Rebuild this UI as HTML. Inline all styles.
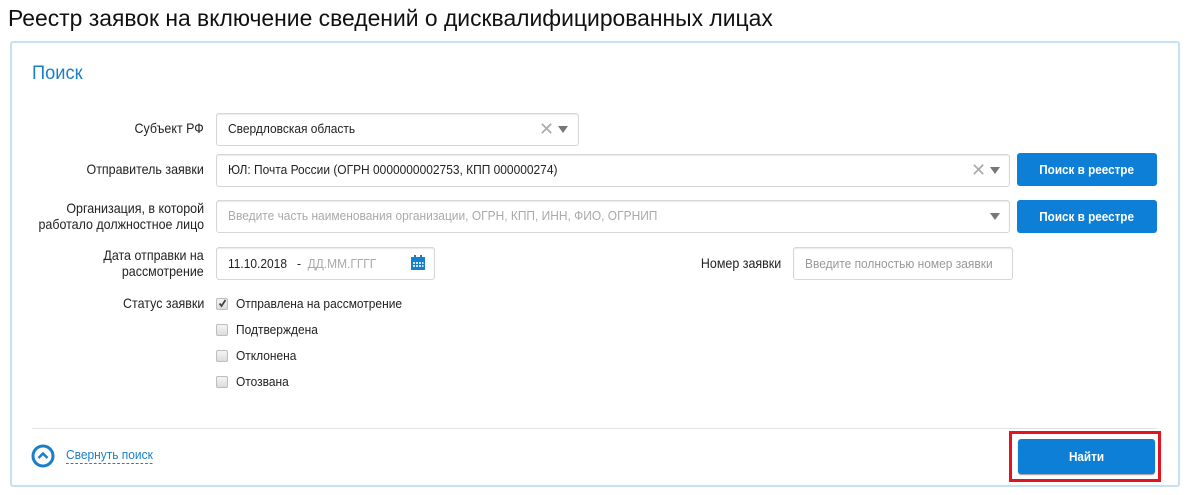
<!DOCTYPE html>
<html><head><meta charset="utf-8"><style>
*{margin:0;padding:0;box-sizing:border-box}
body{width:1197px;height:495px;background:#fff;position:relative;overflow:hidden;font-family:"Liberation Sans",sans-serif;color:#222}
.a{position:absolute;white-space:nowrap}
.t{font-size:13px;transform:scaleX(.92);transform-origin:left center}
.r{font-size:14px;transform:scaleX(.89);transform-origin:right center;text-align:right}
.box{position:absolute;border:1px solid #d6d6d6;border-radius:3px;background:#fff;box-shadow:inset 0 1px 1px #e8e8e8}
.btn{position:absolute;background:#0d7fd7;border-radius:3px;color:#fff;font-weight:bold;font-size:13px;display:flex;align-items:center;justify-content:center}
.btn span{transform:scaleX(.9)}
.cb{position:absolute;left:216px;width:12px;height:12px;border:1px solid #bdbdbd;border-radius:2px;background:linear-gradient(#f4f4f4,#dcdcdc)}
.tri{position:absolute;width:0;height:0;border-left:5px solid transparent;border-right:5px solid transparent;border-top:7px solid #777}
.x{position:absolute;font-size:18px;color:#aaa;line-height:1}
</style></head><body>
<div class="a" style="left:8px;top:5px;font-size:23px;color:#111;transform:scaleX(.995);transform-origin:left center">Реестр заявок на включение сведений о дисквалифицированных лицах</div>
<div class="a" style="left:10px;top:41px;width:1170px;height:446px;border:2px solid #c6e0f4;border-radius:3px"></div>
<div class="a" style="left:32px;top:63px;font-size:19px;color:#1a7fc9;transform:scaleX(.96);transform-origin:left center">Поиск</div>

<div class="a r" style="right:993px;top:120px">Субъект РФ</div>
<div class="box" style="left:216px;top:113px;width:363px;height:33px"></div>
<div class="a t" style="left:228px;top:121px">Свердловская область</div>
<div class="x" style="left:539px;top:120px">✕</div><div class="tri" style="left:558px;top:126px"></div>

<div class="a r" style="right:993px;top:161px">Отправитель заявки</div>
<div class="box" style="left:216px;top:154px;width:794px;height:33px"></div>
<div class="a t" style="left:228px;top:162px">ЮЛ: Почта России (ОГРН 0000000002753, КПП 000000274)</div>
<div class="x" style="left:971px;top:161px">✕</div><div class="tri" style="left:990px;top:167px"></div>
<div class="btn" style="left:1017px;top:153px;width:140px;height:33px"><span>Поиск в реестре</span></div>

<div class="a r" style="right:993px;top:200px;line-height:16px">Организация, в которой<br>работало должностное лицо</div>
<div class="box" style="left:216px;top:200px;width:794px;height:33px"></div>
<div class="a t" style="left:228px;top:208px;color:#aaa">Введите часть наименования организации, ОГРН, КПП, ИНН, ФИО, ОГРНИП</div>
<div class="tri" style="left:990px;top:213px"></div>
<div class="btn" style="left:1017px;top:200px;width:140px;height:33px"><span>Поиск в реестре</span></div>

<div class="a r" style="right:993px;top:247px;line-height:16px">Дата отправки на<br>рассмотрение</div>
<div class="box" style="left:216px;top:247px;width:219px;height:33px"></div>
<div class="a t" style="left:228px;top:256px">11.10.2018 &nbsp; - &nbsp;<span style="color:#aaa">ДД.ММ.ГГГГ</span></div>
<svg class="a" style="left:410px;top:255px" width="16" height="16" viewBox="0 0 16 16"><rect x="1" y="2" width="14" height="13" fill="#1a7fc9"/><rect x="4" y="0" width="2" height="4" fill="#1a7fc9"/><rect x="10" y="0" width="2" height="4" fill="#1a7fc9"/><g fill="#cfe6f8"><rect x="3" y="7" width="2" height="2"/><rect x="6" y="7" width="2" height="2"/><rect x="9" y="7" width="2" height="2"/><rect x="12" y="7" width="1.5" height="2"/><rect x="3" y="10" width="2" height="2"/><rect x="6" y="10" width="2" height="2"/><rect x="9" y="10" width="2" height="2"/><rect x="12" y="10" width="1.5" height="2"/></g></svg>
<div class="a r" style="right:416px;top:255px">Номер заявки</div>
<div class="box" style="left:793px;top:247px;width:220px;height:33px"></div>
<div class="a t" style="left:805px;top:256px;color:#999">Введите полностью номер заявки</div>

<div class="a r" style="right:993px;top:295px">Статус заявки</div>
<div class="cb" style="top:298px"></div>
<svg class="a" style="left:217px;top:298px" width="11" height="11" viewBox="0 0 11 11"><path d="M2.5 5.5 L4.5 8 L8.5 2" fill="none" stroke="#444" stroke-width="1.8"/></svg>
<div class="a t" style="left:236px;top:296px">Отправлена на рассмотрение</div>
<div class="cb" style="top:324px"></div><div class="a t" style="left:236px;top:322px">Подтверждена</div>
<div class="cb" style="top:350px"></div><div class="a t" style="left:236px;top:348px">Отклонена</div>
<div class="cb" style="top:376px"></div><div class="a t" style="left:236px;top:374px">Отозвана</div>

<div class="a" style="left:32px;top:428px;width:1125px;height:1px;background:#e2e2e2"></div>
<svg class="a" style="left:31px;top:444px" width="24" height="24" viewBox="0 0 24 24"><circle cx="12" cy="12" r="10" fill="none" stroke="#1a7fc9" stroke-width="3"/><path d="M7.5 14 L12 9.5 L16.5 14" fill="none" stroke="#1a7fc9" stroke-width="2.5"/></svg>
<div class="a t" style="left:66px;top:447px;color:#1a7fc9;border-bottom:1px dashed #1a7fc9;padding-bottom:1px">Свернуть поиск</div>

<div class="a" style="left:1009px;top:431px;width:152px;height:51px;border:3px solid #e3141f"></div>
<div class="btn" style="left:1018px;top:439px;width:137px;height:35px;box-shadow:0 1px 1px #999"><span>Найти</span></div>
</body></html>
